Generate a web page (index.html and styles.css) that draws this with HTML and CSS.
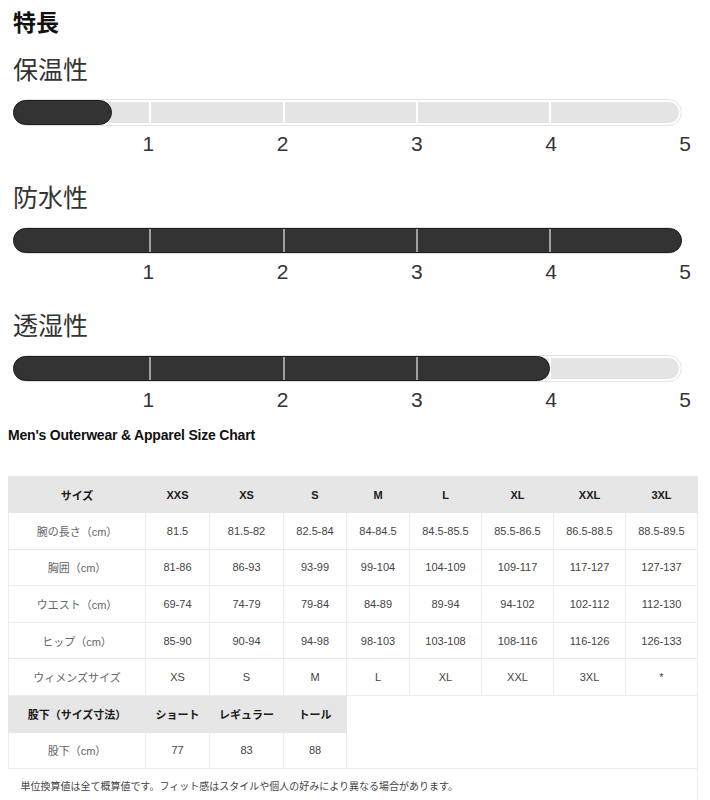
FILE: index.html
```html
<!DOCTYPE html>
<html lang="ja">
<head>
<meta charset="utf-8">
<title>特長</title>
<link rel="stylesheet" href="styles.css">
</head>
<body>
<section class="features">
  <h2 class="features-title">特長</h2>

  <div class="feature">
    <h3 class="feature-name">保温性</h3>
    <div class="track">
      <div class="track-inner"><span></span><span></span><span></span><span></span><span></span></div>
      <div class="fill" style="width: 99px"><div class="fill-seg"><span></span><span></span><span></span><span></span><span></span></div></div>
    </div>
    <div class="scale"><span><b>1</b></span><span><b>2</b></span><span><b>3</b></span><span><b>4</b></span><span><b>5</b></span></div>
  </div>

  <div class="feature">
    <h3 class="feature-name">防水性</h3>
    <div class="track">
      <div class="track-inner"><span></span><span></span><span></span><span></span><span></span></div>
      <div class="fill" style="width: 669px"><div class="fill-seg"><span></span><span></span><span></span><span></span><span></span></div></div>
    </div>
    <div class="scale"><span><b>1</b></span><span><b>2</b></span><span><b>3</b></span><span><b>4</b></span><span><b>5</b></span></div>
  </div>

  <div class="feature">
    <h3 class="feature-name">透湿性</h3>
    <div class="track">
      <div class="track-inner"><span></span><span></span><span></span><span></span><span></span></div>
      <div class="fill" style="width: 537px"><div class="fill-seg"><span></span><span></span><span></span><span></span><span></span></div></div>
    </div>
    <div class="scale"><span><b>1</b></span><span><b>2</b></span><span><b>3</b></span><span><b>4</b></span><span><b>5</b></span></div>
  </div>
</section>

<section class="sizechart">
  <h3 class="chart-title">Men's Outerwear &amp; Apparel Size Chart</h3>
  <table class="chart">
    <colgroup>
      <col class="c-label"><col class="c64"><col class="c74"><col class="c63"><col class="c63"><col class="c72"><col class="c72"><col class="c72"><col class="c72">
    </colgroup>
    <tr class="head">
      <th>サイズ</th><th>XXS</th><th>XS</th><th>S</th><th>M</th><th>L</th><th>XL</th><th>XXL</th><th>3XL</th>
    </tr>
    <tr>
      <td class="label">腕の長さ（cm）</td><td>81.5</td><td>81.5-82</td><td>82.5-84</td><td>84-84.5</td><td>84.5-85.5</td><td>85.5-86.5</td><td>86.5-88.5</td><td>88.5-89.5</td>
    </tr>
    <tr>
      <td class="label">胸囲（cm）</td><td>81-86</td><td>86-93</td><td>93-99</td><td>99-104</td><td>104-109</td><td>109-117</td><td>117-127</td><td>127-137</td>
    </tr>
    <tr>
      <td class="label">ウエスト（cm）</td><td>69-74</td><td>74-79</td><td>79-84</td><td>84-89</td><td>89-94</td><td>94-102</td><td>102-112</td><td>112-130</td>
    </tr>
    <tr>
      <td class="label">ヒップ（cm）</td><td>85-90</td><td>90-94</td><td>94-98</td><td>98-103</td><td>103-108</td><td>108-116</td><td>116-126</td><td>126-133</td>
    </tr>
    <tr>
      <td class="label">ウィメンズサイズ</td><td>XS</td><td>S</td><td>M</td><td>L</td><td>XL</td><td>XXL</td><td>3XL</td><td>*</td>
    </tr>
    <tr class="head">
      <th>股下（サイズ寸法）</th><th>ショート</th><th>レギュラー</th><th>トール</th>
      <td class="blank" colspan="5" rowspan="2"></td>
    </tr>
    <tr>
      <td class="label">股下（cm）</td><td>77</td><td>83</td><td>88</td>
    </tr>
    <tr>
      <td class="note" colspan="9">単位換算値は全て概算値です。フィット感はスタイルや個人の好みにより異なる場合があります。</td>
    </tr>
  </table>
</section>
</body>
</html>
```

FILE: styles.css
```css
html, body {
  margin: 0;
  padding: 0;
  background: #fff;
}

body {
  font-family: "Liberation Sans", "Noto Sans CJK JP", Arial, sans-serif;
  color: #222;
}

.features {
  padding: 5px 0 0 13px;
}

.features-title {
  margin: 0;
  font-family: "Noto Sans CJK JP", sans-serif;
  font-size: 23px;
  font-weight: 700;
  line-height: 32px;
  color: #111;
}

.feature {
  margin-top: 15px;
}

.feature + .feature {
  margin-top: 24px;
}

.feature-name {
  margin: 0;
  font-family: "Noto Sans CJK JP", sans-serif;
  font-size: 25px;
  font-weight: 400;
  line-height: 32px;
  color: #333;
}

.track {
  position: relative;
  margin-top: 15px;
  width: 669px;
  height: 27px;
  box-sizing: border-box;
  border: 1px solid #e3e3e3;
  border-radius: 14px;
  background: #fff;
  padding: 2px;
}

.track-inner {
  display: flex;
  height: 100%;
  border-radius: 11px;
  background: #e4e4e4;
  overflow: hidden;
}

.track-inner span,
.fill-seg span {
  box-sizing: border-box;
  flex: 0 0 133px;
}

.track-inner span:nth-child(2),
.fill-seg span:nth-child(2) {
  flex-basis: 134px;
}

.track-inner span:last-child,
.fill-seg span:last-child {
  flex: 1 1 auto;
}

.track-inner span + span {
  border-left: 2px solid #fff;
}

.fill {
  position: absolute;
  left: -1px;
  top: 0;
  height: 25px;
  box-sizing: border-box;
  border: 1px solid #1c1c1c;
  border-radius: 13px;
  background: #333;
  overflow: hidden;
}

.fill-seg {
  display: flex;
  width: 665px;
  height: 100%;
  padding-left: 2px;
}

.fill-seg span + span {
  border-left: 2px solid #a0a0a0;
}

.scale {
  display: flex;
  width: 671px;
  margin-top: 6px;
  height: 24px;
  font-family: "Liberation Sans", Arial, sans-serif;
  font-size: 21px;
  line-height: 24px;
  color: #333;
}

.scale span {
  flex: 1;
  text-align: right;
}

.scale b {
  font-weight: 400;
  display: inline-block;
  margin-right: -7px;
}

.sizechart {
  padding: 0 0 0 8px;
}

.chart-title {
  margin: 13px 0 31px 0;
  font-family: "Liberation Sans", "Noto Sans CJK JP", sans-serif;
  font-size: 14px;
  font-weight: 700;
  line-height: 20px;
  color: #111;
  letter-spacing: -0.2px;
}

.chart {
  width: 689px;
  table-layout: fixed;
  border-collapse: collapse;
  font-size: 11px;
}

.c-label { width: 137px; }
.c64 { width: 64px; }
.c74 { width: 74px; }
.c63 { width: 63px; }
.c72 { width: 72px; }

.chart th,
.chart td {
  height: 36.6px;
  padding: 0;
  text-align: center;
  vertical-align: middle;
  box-sizing: border-box;
}

.chart td {
  border: 1px solid #ececec;
  color: #444;
}

.chart th {
  background: #e6e6e6;
  border: 1px solid #e6e6e6;
  color: #1a1a1a;
  font-weight: 700;
}

.chart tr.head:first-child th {
  height: 36px;
}

.chart td.label {
  color: #666;
}

.chart td.blank {
  border-left: 1px solid #ececec;
  border-bottom: none;
  border-right: 1px solid #ececec;
}

.chart td.note {
  height: 34px;
  text-align: left;
  padding: 0 12px;
  font-size: 10px;
  color: #444;
  border-left: none;
  border-bottom: none;
  border-right: 1px solid #ececec;
}
```
